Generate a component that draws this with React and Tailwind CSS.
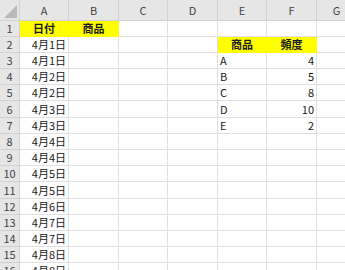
import React from "react";

const colWidths = ["w-[20px]", "w-[49px]", "w-[50px]", "w-[49px]", "w-[50px]", "w-[49px]", "w-[50px]", "w-[40px]"];
const letters = ["A", "B", "C", "D", "E", "F", "G"];

const dates = ["4月1日", "4月1日", "4月2日", "4月2日", "4月3日", "4月3日", "4月4日", "4月4日", "4月5日", "4月5日", "4月6日", "4月7日", "4月7日", "4月8日", "4月8日"];
const freq = { 3: ["A", "4"], 4: ["B", "5"], 5: ["C", "8"], 6: ["D", "10"], 7: ["E", "2"] };
const rowHeights = { 6: "h-[17px]", 11: "h-[17px]" };

const font = { fontFamily: '"Noto Sans CJK JP", "Noto Sans", sans-serif' };

const Cell = ({ i, children, className = "" }) => (
  <div className={`${colWidths[i]} shrink-0 h-full border-r border-b border-[#e1e1e1] flex items-center px-[2px] text-[11px] leading-none text-[#1a1a1a] ${className}`}>
    {children}
  </div>
);

const yellow = "bg-[#ffff00] border-[#ffff00] justify-center font-bold";

const App = () => {
  const rows = [];
  for (let r = 1; r <= 16; r++) {
    const h = rowHeights[r] || "h-[16px]";
    const f = freq[r];
    rows.push(
      <div key={r} className={`flex ${h}`}>
        <div className="w-[20px] shrink-0 h-full bg-[#e6e6e6] border-r border-b border-[#d2d2d2] flex items-center justify-center text-[11px] text-[#444]">
          {r}
        </div>
        {r === 1 ? (
          <>
            <Cell i={1} className={yellow}>日付</Cell>
            <Cell i={2} className={yellow}>商品</Cell>
          </>
        ) : (
          <>
            <Cell i={1} className="justify-end">{dates[r - 2]}</Cell>
            <Cell i={2} />
          </>
        )}
        <Cell i={3} />
        <Cell i={4} />
        {r === 2 ? (
          <>
            <Cell i={5} className={yellow}>商品</Cell>
            <Cell i={6} className={yellow}>頻度</Cell>
          </>
        ) : (
          <>
            <Cell i={5}>{f ? f[0] : ""}</Cell>
            <Cell i={6} className="justify-end">{f ? f[1] : ""}</Cell>
          </>
        )}
        <Cell i={7} />
      </div>
    );
  }

  return (
    <div className="w-[345px] h-[270px] overflow-hidden bg-white" style={font}>
      <div className="flex h-[21px] bg-[#e6e6e6]">
        <div className="w-[20px] shrink-0 h-full border-r border-b border-[#d2d2d2] relative">
          <svg className="absolute right-[2px] bottom-[2px]" width="13" height="13" viewBox="0 0 13 13">
            <polygon points="13,0 13,13 0,13" fill="#b9b9b9" />
          </svg>
        </div>
        {letters.map((l, k) => (
          <div key={l} className={`${colWidths[k + 1]} shrink-0 h-full border-r border-b border-[#d2d2d2] flex items-center justify-center text-[11px] text-[#444]`}>
            {l}
          </div>
        ))}
      </div>
      {rows}
    </div>
  );
};

export default App;
